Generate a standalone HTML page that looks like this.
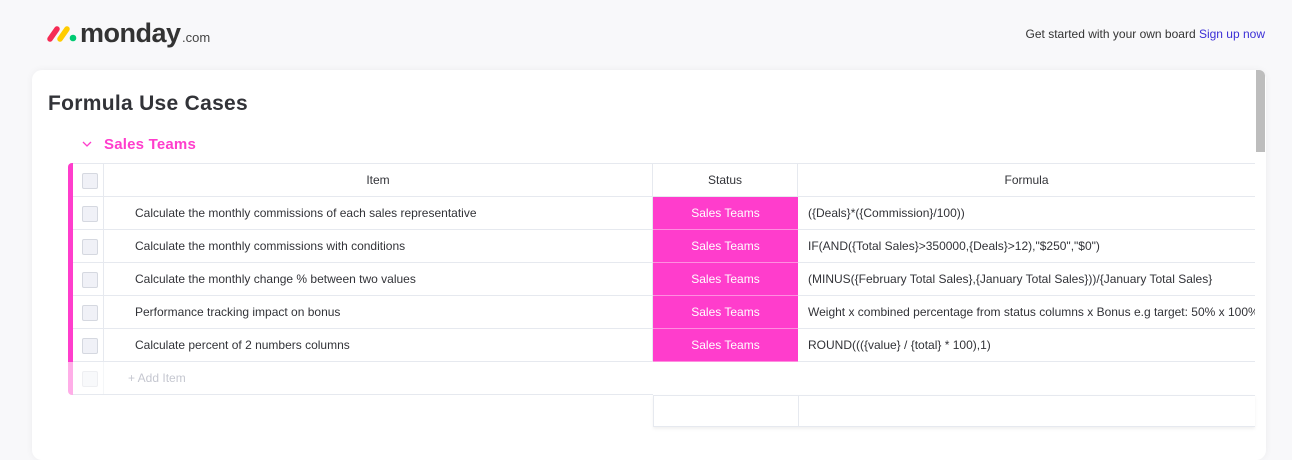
<!DOCTYPE html>
<html><head><meta charset="utf-8"><style>
*{margin:0;padding:0;box-sizing:border-box}
body{width:1292px;height:446px;background:#f8f8fa;font-family:"Liberation Sans",Arial,sans-serif;position:relative;overflow:hidden}
.logo{position:absolute;left:46px;top:18px;height:30px}
.logo .t{position:absolute;left:34px;top:0;font-size:27px;font-weight:bold;color:#333;letter-spacing:-0.5px}
.logo .c{position:absolute;left:136px;top:12px;font-size:13px;color:#444}
.top{position:absolute;right:27px;top:27px;font-size:12px;color:#333}
.top span{color:#3b2fd6}
.card{position:absolute;left:32px;top:70px;width:1234px;height:390px;background:#fff;border-radius:10px;box-shadow:0 0 8px rgba(0,0,0,.05)}
.sb{position:absolute;left:1256px;top:70px;width:9px;height:82px;background:#bdbdbd;border-radius:0 6px 0 0}
h1{position:absolute;left:48px;top:92px;font-size:21px;font-weight:bold;color:#323338;letter-spacing:0.3px}
.grp{position:absolute;left:104px;top:136px;font-size:15px;font-weight:bold;color:#ff3dcc;letter-spacing:0.2px}
.chev{position:absolute;left:82px;top:140px}
.bar{position:absolute;left:68px;top:163px;width:5px;height:199px;background:#ff3dcc;border-radius:4px 0 0 0}
.bar2{position:absolute;left:68px;top:362px;width:5px;height:33px;background:#ffaee8;border-radius:0 0 0 4px}
.row{position:absolute;left:73px;height:33px;border-bottom:1px solid #e6e9ef;font-size:12px;color:#323338}
.row div{position:absolute;top:0;height:33px;line-height:33px;border-right:1px solid #e6e9ef}
.cb{left:0;width:31px}
.cb::after{content:"";position:absolute;left:9px;top:9px;width:14px;height:14px;border:1px solid #d5d8e0;background:#f0f1f7;border-radius:2px}
.it{left:31px;width:549px;padding-left:31px}
.st{left:580px;width:145px;text-align:center;background:#ff3dcc;color:#fff;border-right:none!important;border-bottom:1px solid #ff8ee0}
.fo{left:725px;width:457px;padding-left:10px;white-space:nowrap;overflow:hidden}
.hd div{text-align:center;color:#323338}
.hd{border-top:1px solid #e6e9ef}
</style></head><body>
<div class="logo"><svg width="34" height="30" viewBox="0 0 34 30"><line x1="4" y1="21" x2="11" y2="11" stroke="#f62b54" stroke-width="5.5" stroke-linecap="round"/><line x1="14" y1="21" x2="21" y2="11" stroke="#ffcc00" stroke-width="5.5" stroke-linecap="round"/><circle cx="27" cy="20" r="3.3" fill="#00ca72"/></svg><span class="t">monday</span><span class="c">.com</span></div>
<div class="top">Get started with your own board <span>Sign up now</span></div>
<div class="card"></div>
<div class="sb"></div>
<h1>Formula Use Cases</h1>
<svg class="chev" width="10" height="8" viewBox="0 0 10 8"><path d="M1 2 L5 6 L9 2" fill="none" stroke="#ff3dcc" stroke-width="1.3"/></svg>
<div class="grp">Sales Teams</div>
<div class="bar"></div><div class="bar2"></div>
<div class="row hd" style="top:163px;width:1182px;height:34px"><div class="cb"></div><div class="it" style="padding:0">Item</div><div style="left:580px;width:145px">Status</div><div class="fo" style="padding:0;border:none">Formula</div></div>
<div class="row" style="top:197px;width:1182px"><div class="cb"></div><div class="it">Calculate the monthly commissions of each sales representative</div><div class="st">Sales Teams</div><div class="fo" style="border:none">({Deals}*({Commission}/100))</div></div>
<div class="row" style="top:230px;width:1182px"><div class="cb"></div><div class="it">Calculate the monthly commissions with conditions</div><div class="st">Sales Teams</div><div class="fo" style="border:none">IF(AND({Total Sales}&gt;350000,{Deals}&gt;12),"$250","$0")</div></div>
<div class="row" style="top:263px;width:1182px"><div class="cb"></div><div class="it">Calculate the monthly change % between two values</div><div class="st">Sales Teams</div><div class="fo" style="border:none">(MINUS({February Total Sales},{January Total Sales}))/{January Total Sales}</div></div>
<div class="row" style="top:296px;width:1182px"><div class="cb"></div><div class="it">Performance tracking impact on bonus</div><div class="st">Sales Teams</div><div class="fo" style="border:none">Weight x combined percentage from status columns x Bonus e.g target: 50% x 100%</div></div>
<div class="row" style="top:329px;width:1182px"><div class="cb"></div><div class="it">Calculate percent of 2 numbers columns</div><div class="st">Sales Teams</div><div class="fo" style="border:none">ROUND((({value} / {total} * 100),1)</div></div>
<div class="row" style="top:362px;width:580px"><div class="cb" style="opacity:.4"></div><div class="it" style="color:#c5c7d0;padding-left:24px;border:none">+ Add Item</div></div>
<div style="position:absolute;left:653px;top:395px;width:602px;height:32px;border-left:1px solid #e6e9ef;border-top:1px solid #e6e9ef;border-bottom:1px solid #e6e9ef;box-shadow:0 2px 3px rgba(0,0,0,.06)"><div style="position:absolute;left:144px;top:0;width:1px;height:31px;background:#e6e9ef"></div></div>
</body></html>
